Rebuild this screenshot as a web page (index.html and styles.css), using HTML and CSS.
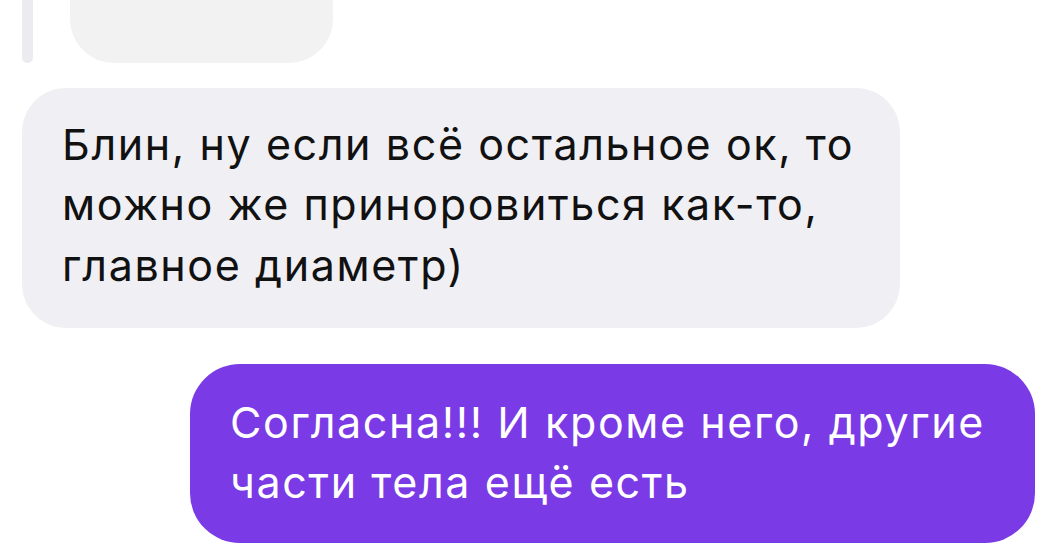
FILE: index.html
```html
<html>
	<head>
		<title>Чат</title>
		<link rel="stylesheet" href="styles.css">
	</head>
	<body>
		<div class="chat">
			<div class="msg msg-reply">
				<div class="reply-line"></div>
				<div class="bubble bubble-quote"></div>
			</div>
			<div class="msg msg-in">
				<div class="bubble bubble-in">Блин, ну если всё остальное ок, то можно же приноровиться как-то, главное диаметр)</div>
			</div>
			<div class="msg msg-out">
				<div class="bubble bubble-out">Согласна!!! И кроме него, другие части тела ещё есть</div>
			</div>
		</div>
	</body>
</html>
```

FILE: styles.css
```css
* {
	box-sizing: border-box;
}
body {
	margin: 0;
	padding: 0;
	background-color: #fff;
	font-family: Inter, "Noto Sans", sans-serif;
	overflow: hidden;
}

.chat {
	display: flex;
	flex-direction: column;
	padding: 0 25px 0 22px;
}

.msg {
	display: flex;
}

/* reply preview, mostly scrolled out of view */
.msg-reply {
	margin-top: -60px;
	gap: 37px;
}
.reply-line {
	width: 11px;
	border-radius: 6px;
	background-color: #ececf0;
}
.bubble-quote {
	width: 263px;
	height: 123px;
	background-color: #f2f2f2;
}

.msg-in {
	margin-top: 25px;
}
.msg-out {
	margin-top: 36px;
	justify-content: flex-end;
}

.bubble {
	border-radius: 44px;
}
.bubble-in,
.bubble-out {
	font-size: 43px;
	letter-spacing: 1.6px;
}
.bubble-in {
	width: 878px;
	padding: 25.5px 40px 33px;
	line-height: 60.5px;
	background-color: #efeff4;
	color: #111;
}
.bubble-out {
	width: 845px;
	padding: 27.5px 40px 31.5px;
	line-height: 60px;
	background-color: #7a3ae5;
	color: #fff;
	border-radius: 50px;
}
```
